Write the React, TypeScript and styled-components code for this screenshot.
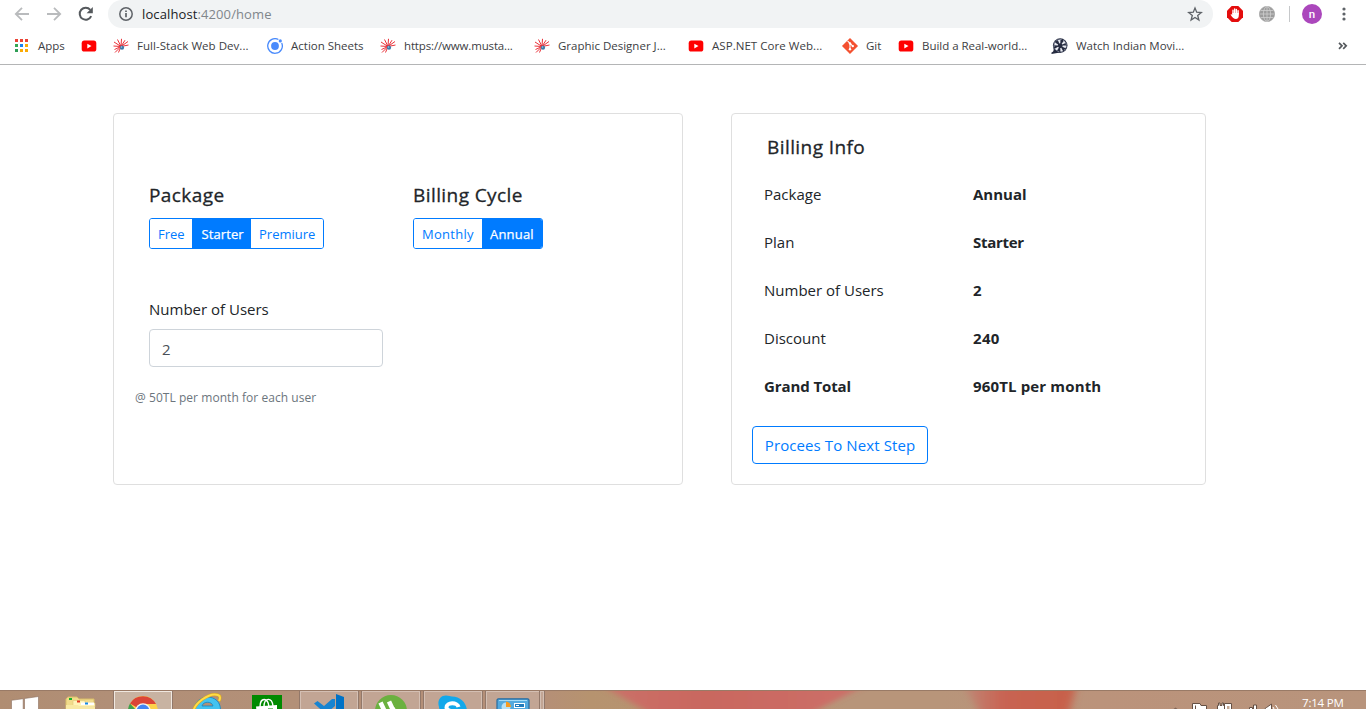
import React from "react";
import styled, { createGlobalStyle } from "styled-components";

const GlobalStyle = createGlobalStyle`
  *, *::before, *::after { box-sizing: border-box; }
  html, body { margin: 0; height: 100%; overflow: hidden; }
  body {
    background: #fff;
    color: #212529;
    font-family: "Open Sans", "Noto Sans", sans-serif;
    font-size: 15px;
    line-height: 24px;
  }
  svg { display: block; flex: none; }
`;

const Screen = styled.div`
  display: flex;
  flex-direction: column;
  width: 1366px;
  height: 709px;
  overflow: hidden;
`;

/* ---------- browser chrome ---------- */

const Toolbar = styled.header`
  display: flex;
  align-items: center;
  height: 28px;
  padding-left: 13px;
`;

const NavIcons = styled.div`
  display: flex;
  gap: 14px;
  width: 95px;
`;

const Omnibox = styled.div`
  display: flex;
  align-items: center;
  width: 1105px;
  height: 28px;
  padding: 0 10px;
  border-radius: 14px;
  background: #f1f3f4;
`;

const Url = styled.div`
  flex: 1;
  padding-left: 8px;
  color: #80868b;
  font-size: 13px;
  letter-spacing: 0.11px;
  b { color: #202124; font-weight: 400; }
`;

const Extensions = styled.div`
  display: flex;
  align-items: center;
  padding-left: 14px;
`;

const Divider = styled.span`
  width: 1px;
  height: 16px;
  margin: 0 12px 0 14px;
  background: #c6c8ca;
`;

const Avatar = styled.span`
  width: 20px;
  height: 20px;
  margin-right: 15px;
  border-radius: 50%;
  background: #ab47bc;
  color: #fff;
  font: 500 11.5px/20px Roboto, sans-serif;
  text-align: center;
`;

const Bookmarks = styled.nav`
  display: flex;
  align-items: center;
  height: 37px;
  padding-left: 13px;
  border-bottom: 1px solid #b4b5b6;
`;

const Bookmark = styled.div<{ $width: number; $track?: number }>`
  display: flex;
  align-items: center;
  gap: 8px;
  width: ${(p) => p.$width}px;
  color: #3c4043;
  font-size: 11.5px;
  letter-spacing: ${(p) => p.$track ?? 0}px;
  white-space: nowrap;
`;

/* ---------- page ---------- */

const Page = styled.main`
  display: flex;
  flex: 1;
  align-items: flex-start;
  gap: 48px;
  padding: 48px 0 0 113px;
`;

const Card = styled.section<{ $width: number; $pad: string }>`
  width: ${(p) => p.$width}px;
  height: 372px;
  padding: ${(p) => p.$pad};
  border: 1px solid #dfdfdf;
  border-radius: 4px;
`;

const Choices = styled.div`
  display: grid;
  grid-template-columns: 264px 1fr;
  padding-left: 15px;
`;

const Title = styled.h5`
  margin: 0 0 11px;
  font-size: 19px;
  font-weight: 500;
  line-height: 24px;
  letter-spacing: 0.42px;
  -webkit-text-stroke: 0.3px currentColor;
`;

const ButtonGroup = styled.div`
  display: inline-flex;
  height: 31px;
  border: 1px solid #007bff;
  border-radius: 3px;
  overflow: hidden;
`;

const Segment = styled.button<{ $active?: boolean; $width: number; $track?: number }>`
  width: ${(p) => p.$width}px;
  padding: 1px 0 0 8px;
  border: 0;
  background: ${(p) => (p.$active ? "#007bff" : "#fff")};
  color: ${(p) => (p.$active ? "#fff" : "#007bff")};
  font: 400 13px/28px "Open Sans", sans-serif;
  letter-spacing: ${(p) => p.$track ?? 0}px;
  text-align: left;
  -webkit-text-stroke: ${(p) => (p.$active ? "0.25px #fff" : "0")};
`;

const Field = styled.label`
  display: block;
  margin-top: 48px;
  padding-left: 15px;
`;

const Label = styled.span`
  display: block;
  margin-bottom: 8px;
`;

const Input = styled.input`
  display: block;
  width: 234px;
  height: 38px;
  padding: 2px 12px 0;
  border: 1px solid #ced4da;
  border-radius: 4px;
  color: #495057;
  font: 15px "Open Sans", sans-serif;
`;

const Hint = styled.small`
  display: block;
  margin-top: 19px;
  padding-left: 1px;
  color: #6c757d;
  font-size: 12px;
  letter-spacing: 0.05px;
`;

const Summary = styled.dl`
  display: grid;
  grid-template-columns: 209px 1fr;
  grid-auto-rows: 48px;
  margin: 12px 0 4px;
  padding-left: 12px;
`;

const Term = styled.dt<{ $bold?: boolean }>`
  font-weight: ${(p) => (p.$bold ? 700 : 400)};
  letter-spacing: ${(p) => (p.$bold ? -0.1 : 0)}px;
`;

const Value = styled.dd<{ $track?: number }>`
  margin: 0;
  font-weight: 700;
  letter-spacing: ${(p) => p.$track ?? 0}px;
`;

const NextButton = styled.button`
  display: block;
  width: 176px;
  height: 38px;
  padding: 0 0 1px;
  border: 1px solid #007bff;
  border-radius: 4px;
  background: #fff;
  color: #007bff;
  font: 15px "Open Sans", sans-serif;
  letter-spacing: 0.1px;
`;

/* ---------- taskbar ---------- */

const Taskbar = styled.footer`
  position: relative;
  display: flex;
  height: 19px;
  border-top: 1px solid #997a66;
  overflow: hidden;
  background: linear-gradient(90deg, #b08d72 0, #b18f77 110px, #b39078 300px, #b58f78 540px, #b6936f 590px, #b8957a 850px, #b8957a 940px, #bb937b 1100px, #b8947c 1366px);
`;

const Wallpaper = styled.svg`
  position: absolute;
  top: 0;
  left: 560px;
`;

const Task = styled.div<{ $width: number; $state?: "open" | "active" }>`
  display: flex;
  justify-content: center;
  flex: none;
  width: ${(p) => p.$width}px;
  height: 40px;
  border: solid ${(p) => (p.$state === "active" ? "#f0e8e0" : "#d4bfb3")};
  border-width: ${(p) => (p.$state ? "1px 1px 0" : "0")};
  background: ${(p) => (p.$state === "active" ? "#c8b3a2" : p.$state ? "#c2a594" : "transparent")};
  box-shadow: ${(p) => (p.$state ? "0 0 0 1px #92786a" : "none")};
`;

const Gap = styled.span<{ $width: number }>`
  flex: none;
  width: ${(p) => p.$width}px;
`;

const Tray = styled.div`
  position: relative;
  display: flex;
  flex: 1;
  justify-content: flex-end;
  padding-right: 21px;
`;

const Clock = styled.time`
  width: 43px;
  margin-left: 22px;
  color: #fff;
  font-size: 11.5px;
  line-height: 24px;
  letter-spacing: -0.2px;
  white-space: nowrap;
`;

/* ---------- icons ---------- */

const Arrow = ({ flip = false }: { flip?: boolean }) => (
  <svg width="18" height="18" viewBox="0 0 18 18" fill="none" stroke="#b9bbbd" strokeWidth="1.8">
    <path d={flip ? "M2 9h13M9 2.8 15.2 9 9 15.2" : "M16 9H3M9 2.8 2.8 9 9 15.2"} />
  </svg>
);

const Reload = () => (
  <svg width="18" height="18" viewBox="0 0 18 18">
    <path d="M14.2 11.2A6 6 0 1 1 13.3 4.8" fill="none" stroke="#55595d" strokeWidth="2" />
    <path d="M15.8 2v6.2H9.6z" fill="#55595d" />
  </svg>
);

const Info = () => (
  <svg width="16" height="16" viewBox="0 0 16 16" fill="none" stroke="#5f6368" strokeWidth="1.5">
    <circle cx="8" cy="8" r="6.2" />
    <path d="M8 7v4.3M8 4.4v1.6" strokeWidth="1.7" />
  </svg>
);

const Star = () => (
  <svg width="16" height="16" viewBox="0 0 16 16">
    <path
      d="m8 1.9 1.7 4.3 4.6.3-3.6 3 1.2 4.5L8 11.5 4.1 14l1.2-4.5-3.6-3 4.6-.3z"
      fill="none"
      stroke="#5f6368"
      strokeWidth="1.3"
    />
  </svg>
);

const Blocker = () => (
  <svg width="16" height="16" viewBox="0 0 16 16">
    <path d="M4.7 0h6.6L16 4.7v6.6L11.3 16H4.7L0 11.3V4.7z" fill="#e40d0d" />
    <path
      d="M6 8V4.2M7.7 7.5V3M9.4 7.5V3.4M11.1 8V4.8"
      stroke="#fff"
      strokeWidth="1.4"
      strokeLinecap="round"
    />
    <path d="M5.3 7h6.5v2.6c0 2-1.1 3.4-2.9 3.4-2 0-3.3-1.2-5.3-4.3.6-.6 1.2-.4 1.7.3z" fill="#fff" />
  </svg>
);

const Globe = () => (
  <svg width="16" height="16" viewBox="0 0 16 16" stroke="#cfcfcf" strokeWidth=".8" fill="none">
    <circle cx="8" cy="8" r="7.6" fill="#9c9c9c" stroke="#a5a5a5" />
    <ellipse cx="8" cy="8" rx="3.6" ry="7.4" />
    <path d="M8 .6v14.8M.6 8h14.8M1.7 4.5h12.6M1.7 11.5h12.6" />
  </svg>
);

const Menu = () => (
  <svg width="14" height="16" viewBox="0 0 14 16" fill="#5f6368">
    <circle cx="7" cy="3" r="1.6" />
    <circle cx="7" cy="8" r="1.6" />
    <circle cx="7" cy="13" r="1.6" />
  </svg>
);

const appColors = ["#ea4335", "#ea4335", "#ea4335", "#34a853", "#1a82f0", "#fbab05", "#2e9e55", "#fbab05", "#fbab05"];
const AppsIcon = () => (
  <svg width="17" height="16" viewBox="0 0 17 16" shapeRendering="crispEdges">
    {appColors.map((c, i) => (
      <rect key={i} x={2 + (i % 3) * 5} y={1 + Math.floor(i / 3) * 5} width="3" height="3" fill={c} />
    ))}
  </svg>
);

const YouTube = () => (
  <svg width="16" height="16" viewBox="0 0 16 16">
    <rect x=".7" y="2.6" width="14.6" height="11" rx="2.6" fill="#f00" />
    <path d="M6.3 5.7v4.8L10.5 8.1z" fill="#fff" />
  </svg>
);

const Burst = () => (
  <svg width="16" height="16" viewBox="0 0 16 16">
    <path
      d="M8 8.5 1 4M8 8.5 4.5 1.5M8 8.5 8.5.8M8 8.5l4-6.3M8 8.5l7-5M8 8.5l7.5-1.5M8 8.5.5 8M8 8.5l-6.5 3M8 8.5l-6 6M8 8.5l-2.5 6"
      stroke="#ea3038"
      strokeWidth="1"
    />
    <circle cx="9" cy="9.7" r="2.1" fill="#3b78a8" />
    <circle cx="8.5" cy="9" r=".8" fill="#a6cbe5" />
  </svg>
);

const Ionic = () => (
  <svg width="16" height="16" viewBox="0 0 16 16">
    <path d="M11.4 1.5A7.3 7.3 0 1 0 14.7 5" fill="none" stroke="#4a8bfc" strokeWidth="1.3" />
    <circle cx="8" cy="8" r="3.9" fill="#4a8bfc" />
    <circle cx="13.3" cy="2.9" r="1.6" fill="#4a8bfc" />
  </svg>
);

const GitIcon = () => (
  <svg width="16" height="16" viewBox="0 0 16 16">
    <path d="m8 .2 7.8 7.8L8 15.8.2 8z" fill="#f4502f" stroke="#f4502f" strokeLinejoin="round" strokeWidth=".4" />
    <path d="m5.5 2.8 5.3 5.3M8 5.3v6" stroke="#fff" strokeWidth="1.1" />
    <circle cx="8" cy="5.4" r="1.2" fill="#fff" />
    <circle cx="10.8" cy="8.1" r="1.2" fill="#fff" />
    <circle cx="8" cy="11.2" r="1.2" fill="#fff" />
  </svg>
);

const Reel = () => (
  <svg width="17" height="16" viewBox="0 0 17 16">
    <circle cx="9.2" cy="7.6" r="7.3" fill="#252b40" />
    <path d="M2.5 10c.5 3-.5 4-2 4.500V16L9 14.600z" fill="#252b40" />
    <circle cx="9.2" cy="7.6" r="4.2" fill="none" stroke="#e8eaf0" strokeWidth="3.6" strokeDasharray="1.9 2.498" />
    <circle cx="9.2" cy="7.6" r="6.2" fill="none" stroke="#aeb3c4" strokeWidth=".7" strokeDasharray="2 1.5" />
  </svg>
);

const Chevrons = () => (
  <svg width="10" height="10" viewBox="0 0 10 10" fill="none" stroke="#55595d" strokeWidth="1.7">
    <path d="m1 1.8 3 3-3 3M5.2 1.8l3 3-3 3" />
  </svg>
);

const WindowsLogo = () => (
  <svg width="50" height="30" viewBox="0 0 50 30">
    <path
      d="M11.5 9.3 23.2 7.7V30H11.5zM24.5 7.5 38.5 5.5V30h-14z"
      fill="#fff"
      stroke="#8b6f5e"
      strokeWidth=".6"
    />
  </svg>
);

const Folder = () => (
  <svg width="34" height="30" viewBox="0 0 34 30">
    <path d="M2 30V8l2-2h9l2 2h15v22z" fill="#f1db8b" stroke="#d9bd68" />
    <path d="M9 12V9.500h12V12h10v4H9z" fill="#fff3b7" stroke="#dfc675" strokeWidth=".6" />
    <path d="M17 14v-2.500h13V14z" fill="#fff" />
    <path d="M5 7h3v2H5z" fill="#16b32e" />
    <path d="M13 9.500h3v2h-3z" fill="#e23920" />
    <path d="M21 11.500h3v2h-3z" fill="#1889e0" />
    <path d="M2 30V14h12l2 2h15v14z" fill="#f8e8a3" />
  </svg>
);

const Chrome = () => (
  <svg width="32" height="35" viewBox="0 -3 32 35">
    <circle cx="16" cy="16" r="15" fill="#fdd14b" />
    <path d="M16 16 3 8.500A15 15 0 0 1 29 9H16z" fill="#db4437" />
    <path d="M3 8.500A15 15 0 0 0 14 31l4-13-9-3z" fill="#3d9f52" />
    <circle cx="16" cy="16" r="7.8" fill="#f4f4f4" />
    <circle cx="16" cy="16" r="6.4" fill="#4285f4" />
  </svg>
);

const Explorer = () => (
  <svg width="34" height="34" viewBox="0 0 34 34">
    <path
      d="M17 6a13 13 0 1 0 12.500 17H22c-4 5-10 2-10-3h18.500C31 11 25 6 17 6m-5 9c1-5 10-5 11 0z"
      fill="#43c3f0"
      stroke="#168bc5"
      strokeWidth=".9"
    />
    <path d="M3 23C3 12 20 1 28 4c3 1 2 4 1 6" fill="none" stroke="#dba51f" strokeWidth="3" />
    <path d="M3 23C3 12 20 1 28 4c3 1 2 4 1 6" fill="none" stroke="#ffdb47" strokeWidth="2" />
  </svg>
);

const Store = () => (
  <svg width="30" height="34" viewBox="0 -4 30 34">
    <path d="M0 0h30v30H0z" fill="#008a00" />
    <path d="M4 11.500l21-1.500v20H6z" fill="#fff" />
    <path d="M8 12c0-10 8-10 9 0M12 12c0-10 8-10 9-1" fill="none" stroke="#fff" strokeWidth="1.4" />
    <path d="M10 14h5v4h-5zM16 13.500h5V18h-5z" fill="#008a00" />
  </svg>
);

const Code = () => (
  <svg width="32" height="34" viewBox="0 -2 32 34">
    <path d="M1 9.500 4.500 7 11 12l8-7h3v7l-7 6 8 7v4z" fill="#1784d1" />
    <path d="M23 0 31 3v28l-8-3z" fill="#0072c6" />
  </svg>
);

const Torrent = () => (
  <svg width="34" height="36" viewBox="0 -2 34 36">
    <circle cx="17" cy="17" r="16" fill="#6bb13f" />
    <path
      d="M6.5 8.5 11 18c3 6 10 4 8-2l-4-8.5M18.5 14c2 5 6 7 10 3"
      fill="none"
      stroke="#fff"
      strokeWidth="4.6"
    />
  </svg>
);

const Skype = () => (
  <svg width="32" height="35" viewBox="0 -3 32 35">
    <path d="M9 .5c3 0 4 1 6 1 9 0 15 7 15 15v14H10C1 24 3 15 2 12 0 6 3 .5 9 .5" fill="#12a8ea" />
    <path
      d="M21.5 12c-1-5-12-5-12 .5 0 5 12 3 12 8s-11 5-12 0"
      fill="none"
      stroke="#fff"
      strokeWidth="4"
    />
  </svg>
);

const ControlPanel = () => (
  <svg width="34" height="36" viewBox="0 -6 34 36">
    <rect x="1" y=".8" width="32" height="28" rx="1.5" fill="#54aade" stroke="#276b9f" strokeWidth="1.2" />
    <path d="M3 2.5h28" stroke="#a4dcf7" />
    <circle cx="10" cy="9" r="4.5" fill="#b8e1f4" />
    <path d="M10 3.5A5.5 5.5 0 0 1 15 9h-5z" fill="#f69b20" />
    <rect x="18.5" y="5.5" width="10" height="4" fill="#217bbb" stroke="#fff" />
    <path d="M20 7.5h3" stroke="#fff" />
  </svg>
);

const TrayIcons = () => (
  <svg width="108" height="18" viewBox="0 0 108 18" fill="#fff" stroke="#655044" strokeWidth="1">
    <path d="m1.5 18 2-1.500L5.500 18z" stroke="none" fill="#806557" />
    <path d="M20.5 18V12.500H28l1 2h5.500V18" />
    <path d="M23.5 14.500V18" fill="none" />
    <path d="M45.5 18v-3.500h1V12h1.500v2.500h2V12h1.500v2.500h1V18M52.500 18v-5.500h7V18" />
    <path d="M55 15h2.500v3H55z" fill="#c5a895" stroke="none" />
    <path d="M77.5 18v-1.500h3V18M81.500 18v-4h3v4" />
    <path d="m92.5 18 2-1.500 5-3.500v5" />
    <path d="M101 16l1 2M103.500 14l2.500 4" stroke="#fff" fill="none" />
  </svg>
);

const WallpaperGlow = () => (
  <Wallpaper width="560" height="18" viewBox="0 0 560 18">
    <defs>
      <filter id="soft" x="-10%" y="-60%" width="120%" height="220%">
        <feGaussianBlur stdDeviation="6 1" />
      </filter>
      <filter id="softer" x="-20%" y="-60%" width="140%" height="220%">
        <feGaussianBlur stdDeviation="4 1" />
      </filter>
      <linearGradient id="rose" x1="0" x2="1" y1="0" y2="0">
        <stop offset="0" stopColor="#cb7169" />
        <stop offset=".4" stopColor="#c9675f" />
        <stop offset="1" stopColor="#cd7069" />
      </linearGradient>
      <linearGradient id="ember" x1="0" x2="1" y1="0" y2="0">
        <stop offset="0" stopColor="#be8978" />
        <stop offset=".35" stopColor="#c96352" />
        <stop offset="1" stopColor="#c7614a" />
      </linearGradient>
    </defs>
    <path d="M38-8h272L243 26H96z" fill="url(#rose)" filter="url(#soft)" />
    <path d="M403-8h114l-9 34h-86z" fill="url(#ember)" filter="url(#softer)" />
  </Wallpaper>
);

/* ---------- data ---------- */

const bookmarks = [
  { icon: <AppsIcon />, text: "Apps", width: 68 },
  { icon: <YouTube />, text: "", width: 32 },
  { icon: <Burst />, text: "Full-Stack Web Dev...", width: 154, track: 0.05 },
  { icon: <Ionic />, text: "Action Sheets", width: 113 },
  { icon: <Burst />, text: "https://www.musta...", width: 154, track: -0.15 },
  { icon: <Burst />, text: "Graphic Designer J...", width: 154 },
  { icon: <YouTube />, text: "ASP.NET Core Web...", width: 154, track: 0.05 },
  { icon: <GitIcon />, text: "Git", width: 56 },
  { icon: <YouTube />, text: "Build a Real-world...", width: 153, track: -0.03 },
  { icon: <Reel />, text: "Watch Indian Movi...", width: 287 },
];

const summary = [
  { term: "Package", value: "Annual" },
  { term: "Plan", value: "Starter", track: -0.28 },
  { term: "Number of Users", value: "2" },
  { term: "Discount", value: "240", track: 0.3 },
  { term: "Grand Total", value: "960TL per month", track: 0.15, bold: true },
];

export default function App() {
  return (
    <Screen>
      <GlobalStyle />
      <Toolbar>
        <NavIcons>
          <Arrow />
          <Arrow flip />
          <Reload />
        </NavIcons>
        <Omnibox>
          <Info />
          <Url>
            <b>localhost</b>:4200/home
          </Url>
          <Star />
        </Omnibox>
        <Extensions>
          <Blocker />
          <Gap $width={16} />
          <Globe />
          <Divider />
          <Avatar>n</Avatar>
          <Menu />
        </Extensions>
      </Toolbar>
      <Bookmarks>
        {bookmarks.map((b, i) => (
          <Bookmark key={i} $width={b.width} $track={b.track}>
            {b.icon}
            {b.text}
          </Bookmark>
        ))}
        <Chevrons />
      </Bookmarks>

      <Page>
        <Card $width={570} $pad="69px 20px 20px">
          <Choices>
            <div>
              <Title>Package</Title>
              <ButtonGroup>
                <Segment $width={42}>Free</Segment>
                <Segment $width={59} $active $track={0.12}>&#8202;Starter</Segment>
                <Segment $width={72}>Premiure</Segment>
              </ButtonGroup>
            </div>
            <div>
              <Title>Billing Cycle</Title>
              <ButtonGroup>
                <Segment $width={68} $track={0.28}>Monthly</Segment>
                <Segment $width={60} $active $track={0.2}>Annual</Segment>
              </ButtonGroup>
            </div>
          </Choices>
          <Field>
            <Label>Number of Users</Label>
            <Input defaultValue="2" />
          </Field>
          <Hint>@ 50TL per month for each user</Hint>
        </Card>

        <Card $width={475} $pad="21px 20px 20px">
          <Choices>
            <Title>Billing Info</Title>
          </Choices>
          <Summary>
            {summary.map((row) => (
              <React.Fragment key={row.term}>
                <Term $bold={row.bold}>{row.term}</Term>
                <Value $track={row.track}>{row.value}</Value>
              </React.Fragment>
            ))}
          </Summary>
          <NextButton>Procees To Next Step</NextButton>
        </Card>
      </Page>

      <Taskbar>
        <WallpaperGlow />
        <Task $width={50}><WindowsLogo /></Task>
        <Task $width={62}><Folder /></Task>
        <Gap $width={2} />
        <Task $width={58} $state="active"><Chrome /></Task>
        <Gap $width={4} />
        <Task $width={62}><Explorer /></Task>
        <Task $width={58}><Store /></Task>
        <Gap $width={4} />
        <Task $width={58} $state="open"><Code /></Task>
        <Gap $width={4} />
        <Task $width={58} $state="open"><Torrent /></Task>
        <Gap $width={4} />
        <Task $width={58} $state="open"><Skype /></Task>
        <Gap $width={4} />
        <Task $width={54} $state="open"><ControlPanel /></Task>
        <Task $width={4} $state="open" />
        <Tray>
          <TrayIcons />
          <Clock>7:14 PM</Clock>
        </Tray>
      </Taskbar>
    </Screen>
  );
}
